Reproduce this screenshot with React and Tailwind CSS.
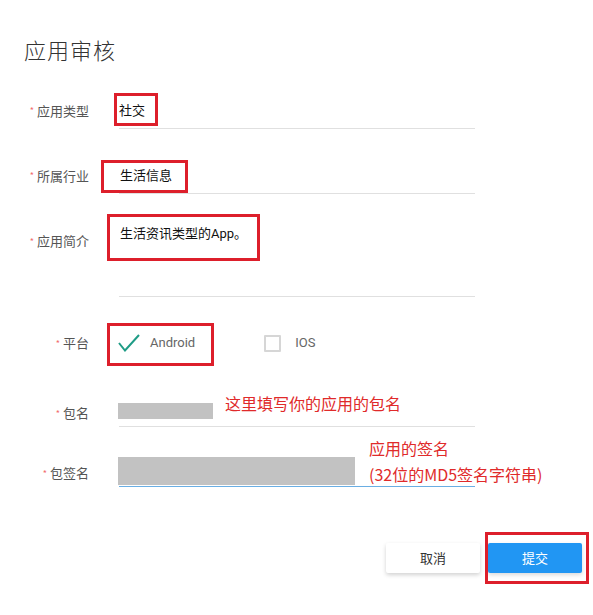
import React from 'react';

const FONT = { fontFamily: '"Noto Sans CJK SC", "Liberation Sans", sans-serif' };

function Label({ children, className = '' }) {
  return (
    <div className={`w-[89px] shrink-0 flex justify-end items-center text-[13px] leading-[20px] text-[#555] ${className}`}>
      <span className="text-[#f26d6d] text-[9px] mr-[3px] leading-none">*</span>
      <span>{children}</span>
    </div>
  );
}

// red annotation boxes drawn over the form
function Mark({ className }) {
  return <div className={`absolute border-[3px] border-[#dd1f2b] pointer-events-none ${className}`} />;
}

export default function App() {
  return (
    <div className="relative w-[593px] h-[615px] bg-white overflow-hidden" style={FONT}>
      <h1 className="pl-[24px] pt-[34px] text-[22px] leading-[30px] font-light tracking-[1px] text-[#333]">应用审核</h1>

      <div className="mt-[28px] flex flex-col">
        {/* 应用类型 */}
        <div className="flex items-center gap-[30px] h-[37px]">
          <Label>应用类型</Label>
          <div className="w-[356px] h-full border-b border-[#e0e0e0] flex items-center text-[13px] text-[#111]">社交</div>
        </div>

        {/* 所属行业 */}
        <div className="mt-[28px] flex items-center gap-[30px] h-[37px]">
          <Label>所属行业</Label>
          <div className="w-[356px] h-full border-b border-[#e0e0e0] flex items-center pl-px text-[13px] text-[#111]">生活信息</div>
        </div>

        {/* 应用简介 */}
        <div className="mt-[27px] flex items-start gap-[30px] h-[76px]">
          <Label className="mt-[10px]">应用简介</Label>
          <div className="w-[356px] h-full border-b border-[#e0e0e0] pt-[2px] pl-px text-[13px] leading-[20px] text-[#111]">
            生活资讯类型的<span style={{ fontFamily: 'Roboto, "Liberation Sans", sans-serif' }}>App</span>。
          </div>
        </div>

        {/* 平台 */}
        <div className="mt-[28px] flex items-center gap-[30px] h-[36px]">
          <Label>平台</Label>
          <div className="flex items-center -ml-px text-[13px] text-[#666]" style={{ fontFamily: 'Roboto, "Liberation Sans", sans-serif' }}>
            <svg width="22" height="18" viewBox="0 0 22 18" className="mr-[10px]">
              <polyline points="1,9 7,16.5 21,1" fill="none" stroke="#1f9c86" strokeWidth="2" />
            </svg>
            <span>Android</span>
            <span className="ml-[69px] w-[17px] h-[17px] border-2 border-[#d6d6d6] rounded-[1px]" />
            <span className="ml-[14px]">IOS</span>
          </div>
        </div>

        {/* 包名 */}
        <div className="mt-[29px] flex items-end gap-[30px] h-[37px]">
          <Label className="mb-[4px]">包名</Label>
          <div className="w-[356px] h-full border-b border-[#e0e0e0] pt-[13px]">
            <div className="-ml-px w-[95px] h-[16px] bg-[#c2c2c2]" />
          </div>
        </div>

        {/* 包签名 */}
        <div className="mt-[23px] flex items-end gap-[30px] h-[37px]">
          <Label className="mb-[4px]">包签名</Label>
          <div className="w-[356px] h-full border-b border-[#6aaee3] pt-[7px]">
            <div className="-ml-px w-[237px] h-[28px] bg-[#c2c2c2]" />
          </div>
        </div>

        {/* buttons */}
        <div className="mt-[56px] flex justify-end gap-[8px] pr-[11px]">
          <button className="w-[94px] h-[30px] rounded-[2px] bg-white text-[13px] text-[#333] shadow-[0_2px_4px_rgba(0,0,0,0.18)]">取消</button>
          <button className="w-[94px] h-[30px] rounded-[2px] bg-[#2196f3] text-[13px] text-white shadow-[0_2px_4px_rgba(0,0,0,0.15)]">提交</button>
        </div>
      </div>

      {/* annotations */}
      <Mark className="left-[114px] top-[93px] w-[44px] h-[33px]" />
      <Mark className="left-[101px] top-[160px] w-[87px] h-[33px]" />
      <Mark className="left-[107px] top-[214px] w-[153px] h-[47px]" />
      <Mark className="left-[107px] top-[323px] w-[107px] h-[43px]" />
      <Mark className="left-[485px] top-[532px] w-[104px] h-[52px]" />

      <div className="absolute left-[225px] top-[392px] text-[16px] leading-[22px] text-[#e02a2a]">这里填写你的应用的包名</div>
      <div className="absolute left-[369px] top-[435px] text-[16px] leading-[26px] text-[#e02a2a]">
        <div>应用的签名</div>
        <div>(32位的MD5签名字符串)</div>
      </div>
    </div>
  );
}
